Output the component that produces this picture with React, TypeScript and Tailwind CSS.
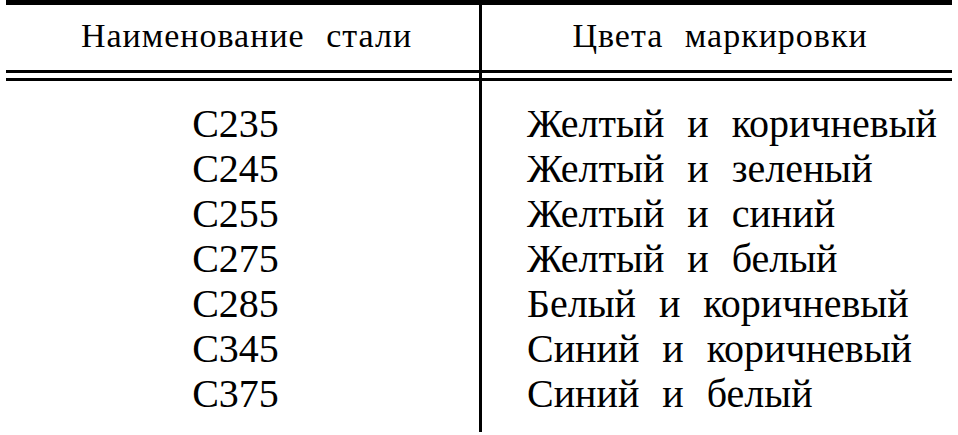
const steels = ["C235", "C245", "C255", "C275", "C285", "C345", "C375"];
const colours = [
  "Желтый и коричневый",
  "Желтый и зеленый",
  "Желтый и синий",
  "Желтый и белый",
  "Белый и коричневый",
  "Синий и коричневый",
  "Синий и белый",
];

export default function App() {
  return (
    <div className="w-[958px] h-[435px] bg-white text-black font-['Liberation_Serif']">
      <div className="ml-[6px] w-[946px] border-t-[5px] border-black flex">
        <div className="w-[476px] border-r-[3px] border-black">
          <div className="h-[65px] pt-[11px] text-[34px] leading-[40px] tracking-[1px] [word-spacing:12px] text-center pl-[8px]">
            <span className="font-['Liberation_Serif']">Наименование стали</span>
          </div>
          <div className="h-[11px] border-y-[3px] border-black" />
          <div className="pt-[20px] pb-[16px] text-[40px] leading-[45px] text-center pr-[14px]">
            {steels.map((s) => (
              <div key={s} className="font-['Liberation_Serif']">{s}</div>
            ))}
          </div>
        </div>
        <div className="w-[470px]">
          <div className="h-[65px] pt-[11px] text-[34px] leading-[40px] tracking-[1px] [word-spacing:12px] text-center pl-[6px]">
            <span className="font-['Liberation_Serif']">Цвета маркировки</span>
          </div>
          <div className="h-[11px] border-y-[3px] border-black" />
          <div className="pt-[20px] pb-[16px] text-[40px] leading-[45px] [word-spacing:13px] pl-[45px] whitespace-nowrap">
            {colours.map((c) => (
              <div key={c} className="font-['Liberation_Serif']">{c}</div>
            ))}
          </div>
        </div>
      </div>
    </div>
  );
}
